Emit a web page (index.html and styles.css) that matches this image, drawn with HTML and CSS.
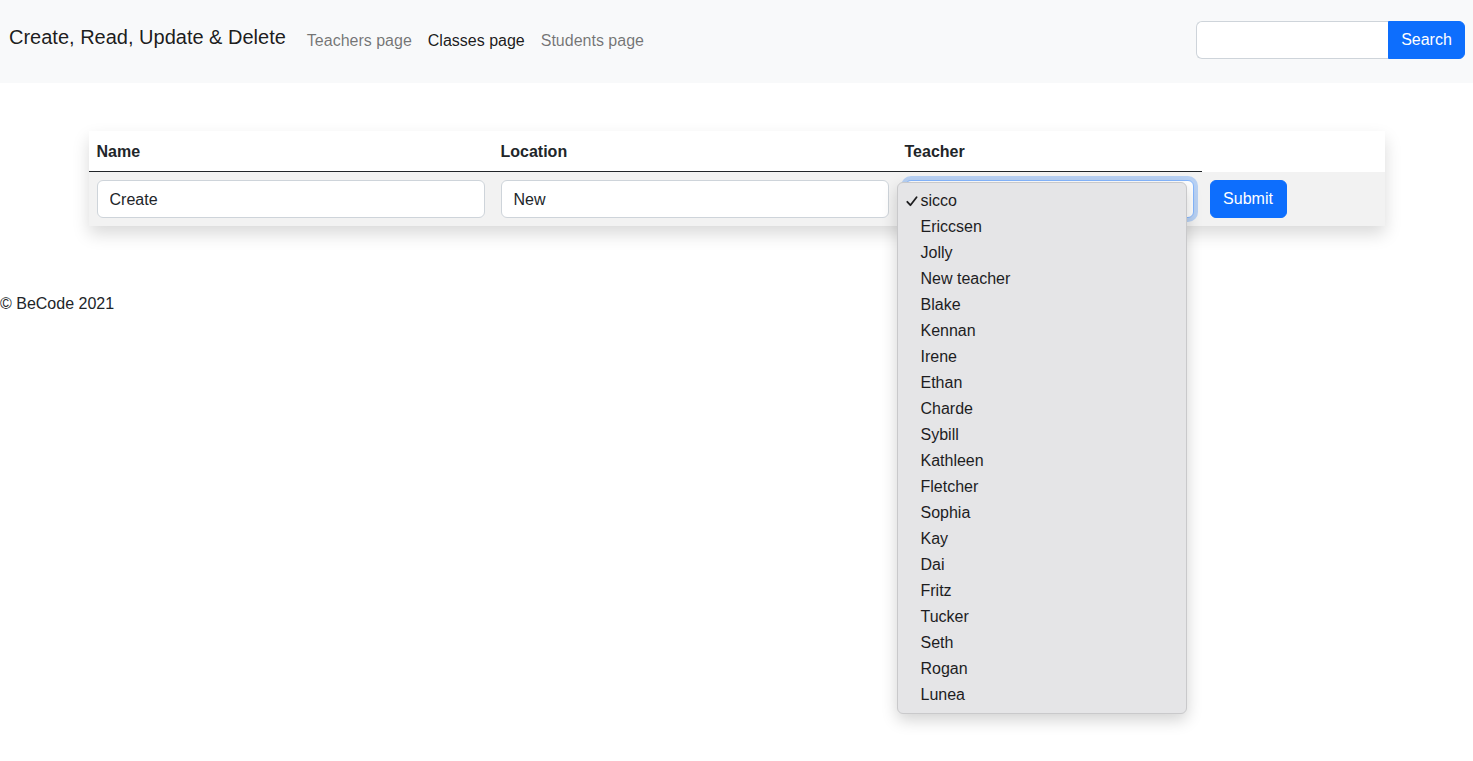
FILE: index.html
```html
<!DOCTYPE html>
<html lang="en">
<head>
<meta charset="utf-8">
<title>Classes page</title>
<link rel="stylesheet" href="styles.css">
</head>
<body>
<nav class="navbar">
  <a class="brand" href="#">Create, Read, Update &amp; Delete</a>
  <ul class="nav">
    <li><a class="nav-link" href="#">Teachers page</a></li>
    <li><a class="nav-link active" href="#">Classes page</a></li>
    <li><a class="nav-link" href="#">Students page</a></li>
  </ul>
  <form class="search">
    <input class="search-input" type="text" aria-label="Search">
    <button class="btn btn-primary btn-search" type="button">Search</button>
  </form>
</nav>

<main class="container">
  <table class="table">
    <thead>
      <tr>
        <th class="col-name">Name</th>
        <th class="col-loc">Location</th>
        <th class="col-teacher">Teacher</th>
      </tr>
    </thead>
    <tbody>
      <tr>
        <td><input class="form-control" type="text" value="Create"></td>
        <td><input class="form-control" type="text" value="New"></td>
        <td class="select-cell">
          <div class="form-select" aria-label="Teacher"></div>
          <div class="menu">
            <div class="item selected"><svg class="check" width="12" height="11" viewBox="0 0 12 11"><path d="M1.3 5.8 L4.4 9.2 L10.6 1.3" fill="none" stroke="#1d1d1f" stroke-width="1.8" stroke-linecap="round" stroke-linejoin="round"/></svg>sicco</div>
            <div class="item">Ericcsen</div>
            <div class="item">Jolly</div>
            <div class="item">New teacher</div>
            <div class="item">Blake</div>
            <div class="item">Kennan</div>
            <div class="item">Irene</div>
            <div class="item">Ethan</div>
            <div class="item">Charde</div>
            <div class="item">Sybill</div>
            <div class="item">Kathleen</div>
            <div class="item">Fletcher</div>
            <div class="item">Sophia</div>
            <div class="item">Kay</div>
            <div class="item">Dai</div>
            <div class="item">Fritz</div>
            <div class="item">Tucker</div>
            <div class="item">Seth</div>
            <div class="item">Rogan</div>
            <div class="item">Lunea</div>
          </div>
        </td>
        <td class="submit-cell"><button class="btn btn-primary btn-submit" type="button">Submit</button></td>
      </tr>
    </tbody>
  </table>
</main>

<footer class="footer">© BeCode 2021</footer>
</body>
</html>
```

FILE: styles.css
```css
* { box-sizing: border-box; }

html, body {
  margin: 0;
  padding: 0;
}

html { min-height: 100%; }

body {
  min-height: 761px;
  font-family: "Liberation Sans", Arial, sans-serif;
  font-size: 16px;
  line-height: 1.5;
  color: #212529;
  background: #fff;
}

.navbar {
  display: flex;
  align-items: center;
  height: 83px;
  padding: 1px 8px 2px 9px;
  background: #f8f9fa;
}

.brand {
  font-size: 20px;
  line-height: 30px;
  color: rgba(0, 0, 0, 0.9);
  text-decoration: none;
  margin-right: 13px;
  margin-bottom: 8px;
  white-space: nowrap;
}

.nav {
  display: flex;
  list-style: none;
  margin: 0;
  padding: 0;
  flex: 1;
}

.nav-link {
  display: block;
  padding: 8px;
  color: rgba(0, 0, 0, 0.55);
  text-decoration: none;
}

.nav-link.active { color: rgba(0, 0, 0, 0.9); }

.search {
  display: flex;
  margin: 0 0 2px;
}

.search-input {
  width: 192px;
  height: 38px;
  border: 1px solid #ced4da;
  border-right: 0;
  border-radius: 6px 0 0 6px;
  background: #fff;
  padding: 6px 12px;
  font: inherit;
}

.btn {
  font-family: inherit;
  font-size: 16px;
  line-height: 24px;
  padding: 6px 12px;
  border: 1px solid transparent;
  border-radius: 6px;
  cursor: pointer;
}

.btn-primary {
  color: #fff;
  background: #0d6efd;
  border-color: #0d6efd;
}

.btn-search {
  width: 77px;
  border-radius: 0 6px 6px 0;
}

.btn-submit { width: 77px; }

.container {
  width: 1296px;
  margin: 48px auto 0;
}

.table {
  width: 100%;
  border-collapse: collapse;
  box-shadow: 0 8px 16px rgba(0, 0, 0, 0.15);
}

.table th {
  text-align: left;
  font-weight: bold;
  padding: 9px 8px 7px;
  line-height: 24px;
  border-bottom: 1px solid #212529;
}

.col-name { width: 404px; }
.col-loc { width: 404px; }
.col-teacher { width: 305px; }

.table td {
  padding: 8px;
  background: #f2f2f2;
  vertical-align: middle;
}

.form-control, .form-select {
  display: block;
  width: 100%;
  height: 38px;
  padding: 7px 12px 5px;
  font: inherit;
  line-height: 24px;
  color: #212529;
  background: #fff;
  border: 1px solid #ced4da;
  border-radius: 6px;
}

.select-cell { position: relative; }

.form-select {
  border-color: #86b7fe;
  box-shadow: 0 0 0 4px rgba(13, 110, 253, 0.25);
}

.menu {
  position: absolute;
  left: 0;
  top: 10px;
  width: 290px;
  padding: 5px 0 5px;
  background: #e5e5e7;
  border: 1px solid #c9c9cb;
  border-radius: 6px;
  box-shadow: 0 6px 16px rgba(0, 0, 0, 0.18);
  z-index: 10;
}

.item {
  position: relative;
  height: 26px;
  line-height: 26px;
  padding-left: 23px;
  font-size: 16px;
  color: #1d1d1f;
  white-space: nowrap;
}

.check {
  position: absolute;
  left: 8px;
  top: 8px;
}

.submit-cell { width: 183px; }

.footer {
  margin-top: 65px;
  padding-top: 1px;
  line-height: 24px;
}
```
